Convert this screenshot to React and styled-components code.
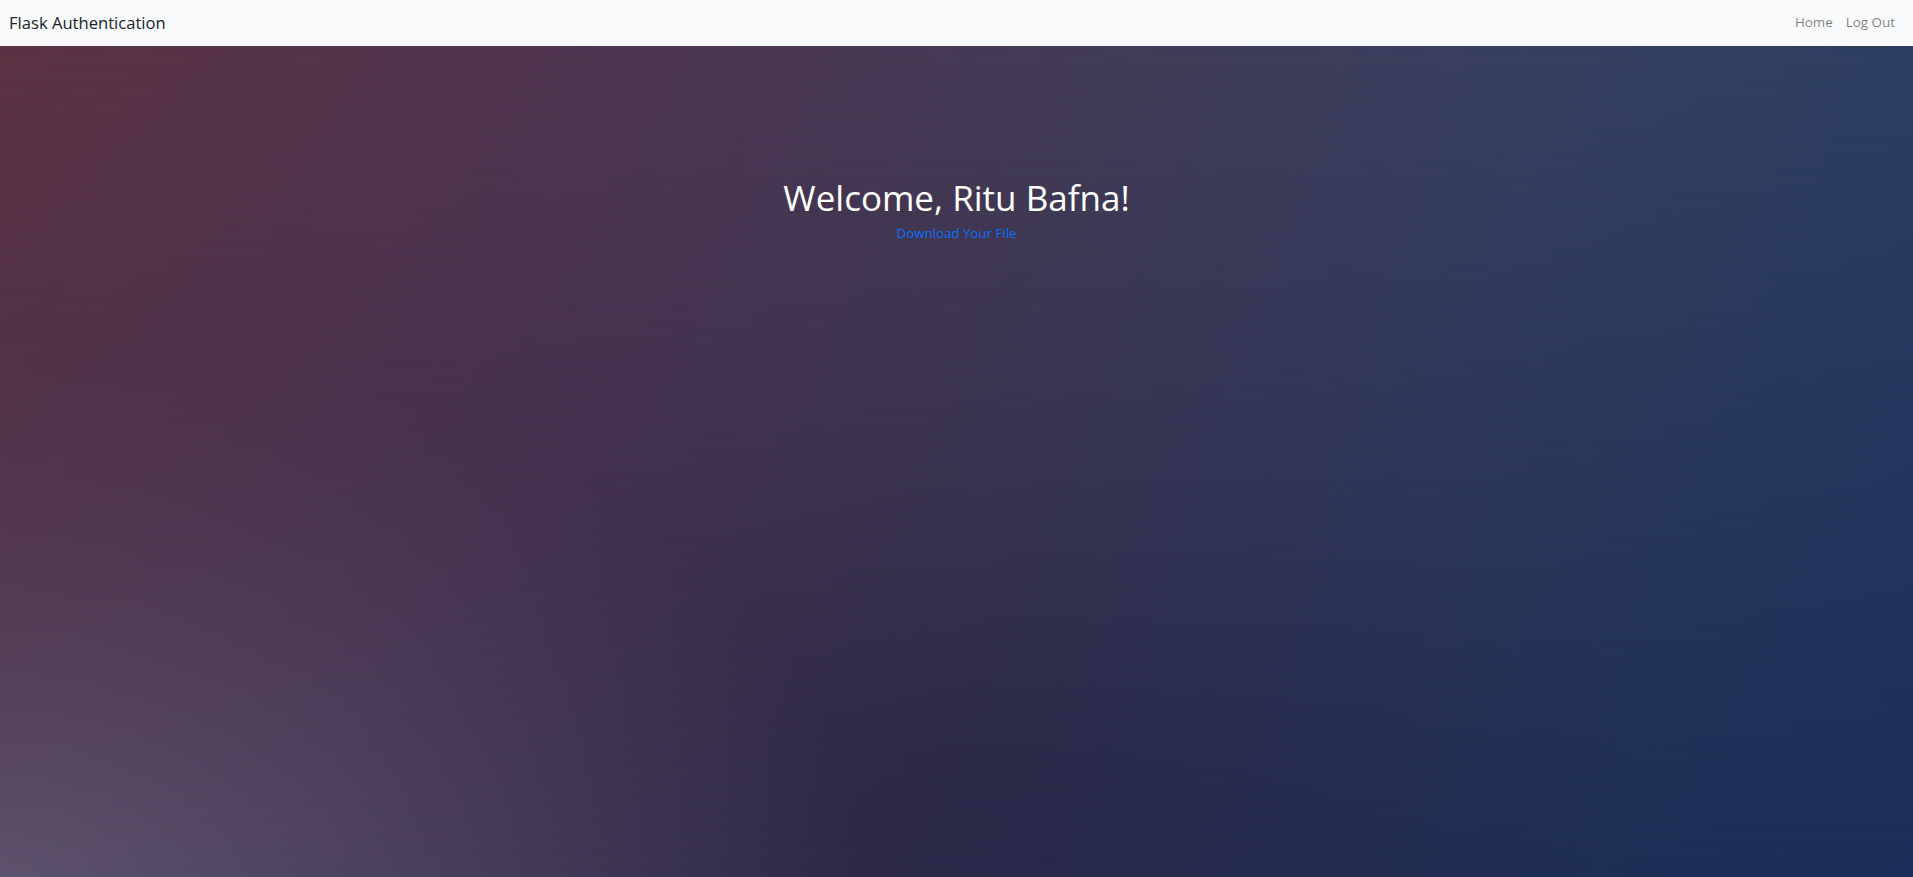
import React from "react";
import styled, { createGlobalStyle } from "styled-components";

const Global = createGlobalStyle`
  html, body { margin: 0; padding: 0; height: 100%; }
  body { font-family: "Open Sans", "Noto Sans", sans-serif; }
  #root { min-height: 100vh; display: flex; flex-direction: column; }
`;

const Page = styled.div`
  min-height: 100vh;
  display: flex;
  flex-direction: column;
`;

const NavBar = styled.nav`
  height: 46px;
  flex: 0 0 46px;
  background: #f8f9fa;
  display: flex;
  align-items: center;
  justify-content: space-between;
  padding: 0 18px 0 9px;
  box-sizing: border-box;
`;

const Brand = styled.a`
  font-size: 16.6px;
  color: #212529;
  text-decoration: none;
  margin-top: -2px;
`;

const NavLinks = styled.div`
  display: flex;
  gap: 13px;
  margin-top: -3px;
`;

const NavLink = styled.a`
  font-size: 13.4px;
  color: rgba(0, 0, 0, 0.5);
  text-decoration: none;
`;

const Hero = styled.main`
  position: relative;
  flex: 1;
  display: flex;
  flex-direction: column;
  align-items: center;
  padding-top: 131px;
  background: linear-gradient(100deg, #5b3343 0%, #4e3650 30%, #443b55 50%, #37405f 75%, #2a3e64 100%);

  &::before {
    content: "";
    position: absolute;
    inset: 0;
    background:
      radial-gradient(ellipse 45% 65% at 0% 100%, rgba(125, 125, 148, 0.45) 0%, rgba(125, 125, 148, 0) 100%),
      radial-gradient(ellipse 35% 40% at 52% 85%, rgba(20, 18, 45, 0.22) 0%, rgba(20, 18, 45, 0) 100%),
      linear-gradient(100deg, #45304a 0%, #3a2d4b 30%, #2f2c4b 50%, #222e53 75%, #192f59 100%);
    -webkit-mask-image: linear-gradient(to bottom, transparent 0%, #000 100%);
    mask-image: linear-gradient(to bottom, transparent 0%, #000 100%);
  }
`;

const Content = styled.div`
  position: relative;
  z-index: 1;
  display: flex;
  flex-direction: column;
  align-items: center;
`;

const Title = styled.h1`
  margin: 0;
  font-size: 35px;
  font-weight: 400;
  color: #ffffff;
  line-height: 1.2;
`;

const FileLink = styled.a`
  margin-top: 5px;
  font-size: 13.3px;
  color: #0d6efd;
  text-decoration: none;
`;

export default function App() {
  return (
    <Page>
      <Global />
      <NavBar>
        <Brand href="#">Flask Authentication</Brand>
        <NavLinks>
          <NavLink href="#">Home</NavLink>
          <NavLink href="#">Log Out</NavLink>
        </NavLinks>
      </NavBar>
      <Hero>
        <Content>
          <Title>Welcome, Ritu Bafna!</Title>
          <FileLink href="#">Download Your File</FileLink>
        </Content>
      </Hero>
    </Page>
  );
}
